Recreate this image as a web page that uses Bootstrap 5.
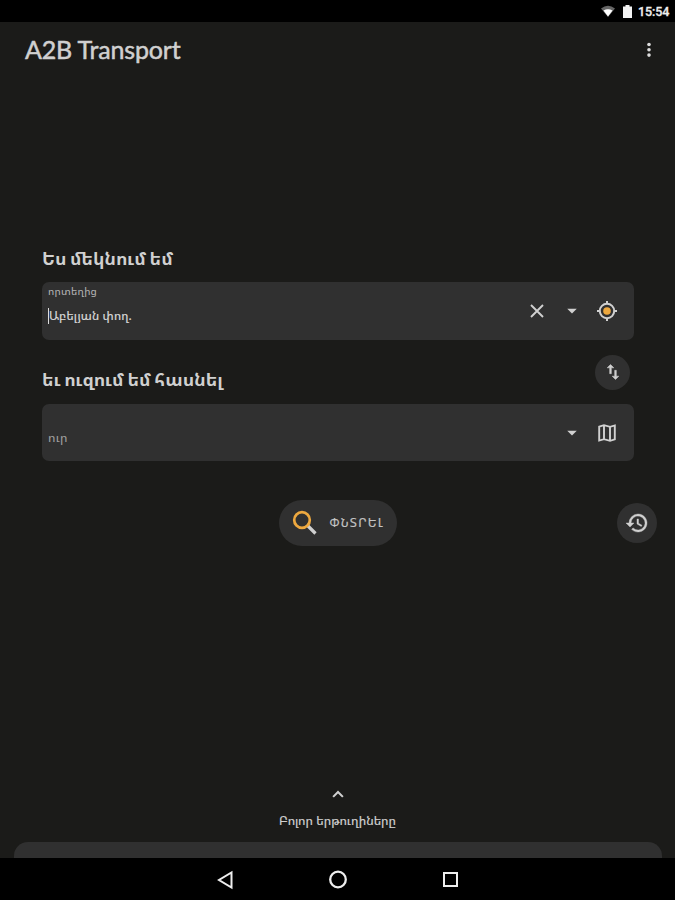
<!DOCTYPE html>
<html lang="hy" data-bs-theme="dark">
<head>
<meta charset="utf-8">
<meta name="viewport" content="width=device-width, initial-scale=1">
<title>A2B Transport</title>
<link href="https://cdn.jsdelivr.net/npm/bootstrap@5.3.0/dist/css/bootstrap.min.css" rel="stylesheet">
<style>
body{background:#1b1b19;color:#d0d0d0;height:900px;overflow:hidden;font-family:"Noto Sans Armenian","DejaVu Sans",sans-serif}
svg{display:block;flex:none}
.statusbar{height:22px;padding-right:6px;font:500 12.5px/22px Roboto,sans-serif;color:#eee}
.clock{-webkit-text-stroke:.3px;width:31px;margin-left:6px;padding-top:1px;white-space:nowrap;letter-spacing:-.1px}
.appbar{height:56px;padding:0 17px 0 25px}
.brand{font:400 25px/54px Lato,sans-serif;letter-spacing:-.16px;color:#d0d0d0;-webkit-text-stroke:.5px #d0d0d0;white-space:nowrap;padding-bottom:2px}
.planner{padding:167px 41px 0 42px}
.heading{font-size:18px;font-weight:700;line-height:26px;white-space:nowrap;margin:0;color:#d0d0d0;word-spacing:-1px}
.field{height:57px;background:#303030;border-radius:7px;padding:0 15px 0 6px}
.from{height:58px;margin-top:11px}
.between{height:64px}
.between .heading{margin-top:14px}
.caption{font-size:10.5px;line-height:12px;color:#b4b4b4;white-space:nowrap;letter-spacing:.2px}
.value{font-size:12px;line-height:16px;white-space:nowrap;color:#d8d8d8;letter-spacing:.15px;-webkit-text-stroke:.2px}
.from-text{padding-top:3px}
.entry{margin-top:11px}
.caret{width:1px;height:16px;background:#ddd}
.hint{font-size:12.5px;line-height:16px;color:#a0a0a0;padding-top:10px;letter-spacing:.2px}
.round{background:#303030;border:0;padding:0;color:#d0d0d0}
.swap{width:35px;height:35px}
.history{width:40px;height:40px}
.search{width:118px;height:46px;background:#303030;border:0;color:#c4c4c4;font-size:12.5px;padding:0 13px 0 12px;white-space:nowrap}
.search span{letter-spacing:1.2px;-webkit-text-stroke:.2px}
.actions{height:46px;margin-top:39px;display:grid;grid-template-columns:1fr 118px 1fr;padding:0 18px 0 19px}
.routes{font-size:12.5px;line-height:18px;white-space:nowrap;-webkit-text-stroke:.2px}
.sheet{height:16px;margin:0 13px 0 14px;background:#303030;border-radius:14px 14px 0 0}
.sysnav{height:42px;gap:93px;padding-top:1px}
</style>
<script src="https://cdn.jsdelivr.net/npm/bootstrap@5.3.0/dist/js/bootstrap.bundle.min.js"></script>
</head>
<body class="d-flex flex-column">
<div class="statusbar bg-black d-flex align-items-center justify-content-end flex-shrink-0">
<svg width="14" height="12" viewBox="0 0 14 12"><path d="M0 3.4Q7-2 14 3.4L7 12Z" fill="#666"/><path d="M2.5 5.6Q7 3 11.5 5.6L7 11.6Z" fill="#fff"/></svg>
<svg class="ms-2" width="9" height="13" viewBox="0 0 9 13"><path d="M0 1.5h2.5V0h4v1.5H9V13H0Z" fill="#f2f2f2"/></svg>
<span class="clock">15:54</span>
</div>
<header class="appbar d-flex align-items-center justify-content-between flex-shrink-0">
<h1 class="brand m-0">A2B Transport</h1>
<svg width="18" height="18" viewBox="0 0 18 18" fill="#ddd"><circle cx="9" cy="3.5" r="1.8"/><circle cx="9" cy="8.8" r="1.8"/><circle cx="9" cy="14.1" r="1.8"/></svg>
</header>
<main class="flex-grow-1 d-flex flex-column">
<section class="planner">
<h2 class="heading">Ես մեկնում եմ</h2>
<div class="field from d-flex align-items-center justify-content-between">
<div class="from-text align-self-start"><div class="caption">որտեղից</div><div class="entry d-flex align-items-center"><span class="caret"></span><span class="value">Աբելյան փող.</span></div></div>
<div class="d-flex align-items-center">
<svg width="24" height="24" viewBox="0 0 24 24" stroke="#d0d0d0" stroke-width="1.9"><path d="m6 6 12 12M18 6 6 18"/></svg>
<svg class="ms-2 me-2 px-1" width="30" height="24" viewBox="0 0 24 24"><path d="M6.8 9.5h10.4l-5.2 5.2Z" fill="#d0d0d0"/></svg>
<svg width="24" height="24" viewBox="0 0 24 24" fill="none" stroke="#d0d0d0" stroke-width="2"><circle cx="12" cy="12" r="7.2"/><path d="M12 2v3m0 14v3M2 12h3m14 0h3"/><circle cx="12" cy="12" r="3.8" fill="#eda83f" stroke="none"/></svg>
</div></div>
<div class="between d-flex align-items-center justify-content-between">
<h2 class="heading">եւ ուզում եմ հասնել</h2>
<button class="round swap rounded-circle d-flex align-items-center justify-content-center me-1" aria-label="Փոխել"><svg width="20" height="20" viewBox="0 0 24 24" fill="#d0d0d0" stroke="#d0d0d0" stroke-width=".6"><path d="M9 3 5 7h3v7h2V7h3ZM16 17v-7h-2v7h-3l4 4 4-4Z"/></svg></button>
</div>
<div class="field d-flex align-items-center justify-content-between">
<div class="hint">ուր</div>
<div class="d-flex align-items-center"><svg class="me-2 px-1" width="30" height="24" viewBox="0 0 24 24"><path d="M6.8 9.5h10.4l-5.2 5.2Z" fill="#d0d0d0"/></svg>
<svg width="24" height="24" viewBox="0 0 24 24" fill="none" stroke="#d0d0d0" stroke-width="1.9"><path d="M4.2 5.6 9 4.2l6 1.6 4.8-1.4v14L15 19.8l-6-1.6-4.8 1.4ZM9 4.2v14M15 5.8v14"/></svg></div>
</div>
</section>
<div class="actions align-items-center">
<span></span>
<button class="search rounded-pill d-flex align-items-center justify-content-between"><svg width="28" height="28" viewBox="0 0 28 28" fill="none"><path d="m17 17 7.5 7.5" stroke="#d0d0d0" stroke-width="3.2"/><circle cx="11" cy="11" r="7.8" stroke="#eda83f" stroke-width="2.7"/></svg><span>ՓՆՏՐԵԼ</span></button>
<button class="round history rounded-circle d-flex align-items-center justify-content-center ms-auto" aria-label="Պատմություն"><svg width="24" height="24" viewBox="0 0 24 24" fill="#d0d0d0" stroke="#d0d0d0" stroke-width=".4"><path d="M13 3a9 9 0 0 0-9 9H1l4 4 4-4H6a7 7 0 1 1 2.05 4.95l-1.42 1.42A9 9 0 1 0 13 3Zm-1 5v5l4.3 2.5.7-1.2-3.5-2.1V8Z"/></svg></button>
</div>
<div class="mt-auto d-flex flex-column align-items-center pb-2">
<svg width="18" height="18" viewBox="0 0 24 24" fill="none" stroke="#d0d0d0" stroke-width="2.8"><path d="m5.5 14.5 6.5-6.5 6.5 6.5"/></svg>
<div class="routes mt-2 mb-1">Բոլոր երթուղիները</div>
</div>
<div class="sheet"></div>
</main>
<nav class="sysnav bg-black d-flex align-items-center justify-content-center flex-shrink-0">
<svg width="20" height="20" viewBox="0 0 20 20" fill="none" stroke="#eee" stroke-width="2"><path d="M16.5 2.5v15L4 10Z"/></svg>
<svg width="20" height="20" viewBox="0 0 20 20" fill="none" stroke="#eee" stroke-width="2.3"><circle cx="10" cy="9.5" r="7.8"/></svg>
<svg width="20" height="20" viewBox="0 0 20 20" fill="none" stroke="#eee" stroke-width="2"><path d="M3 3h13v13H3Z"/></svg>
</nav>
</body>
</html>
